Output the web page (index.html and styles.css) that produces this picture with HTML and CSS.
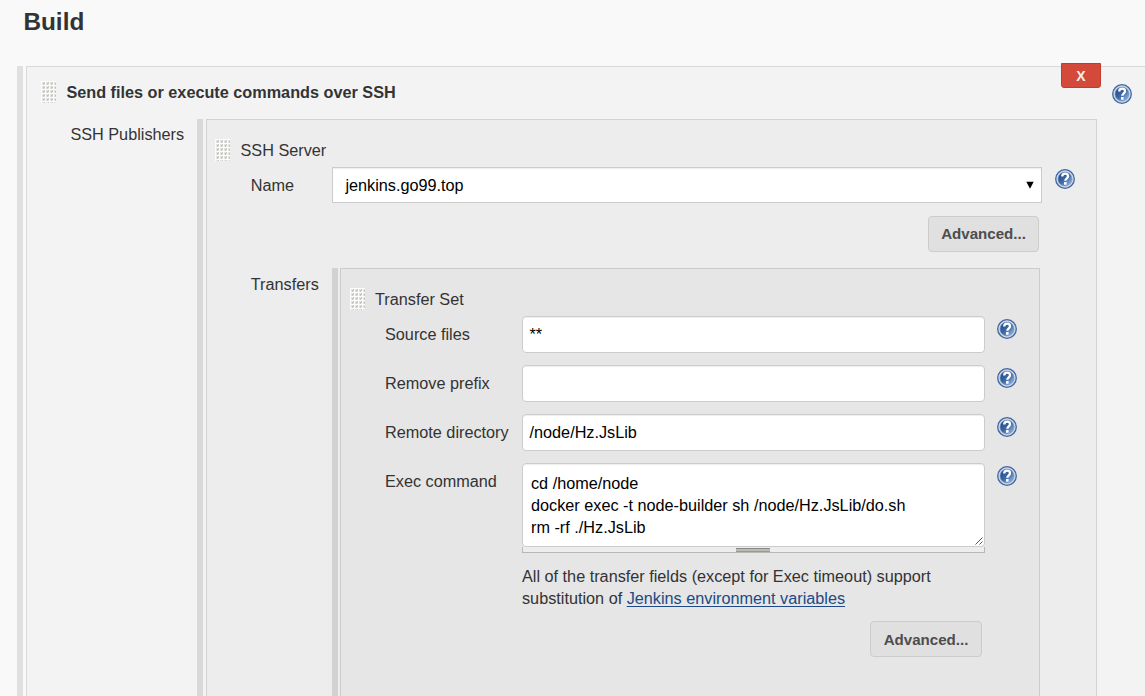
FILE: index.html
```html
<!DOCTYPE html>
<html lang="en">
<head>
<meta charset="utf-8">
<title>Build</title>
<link rel="stylesheet" href="styles.css">
</head>
<body>
<svg class="defs" width="0" height="0" aria-hidden="true">
  <defs>
    <linearGradient id="glass" x1="0" y1="0" x2="1" y2="1">
      <stop offset="0.1" stop-color="#234a86"/>
      <stop offset="0.5" stop-color="#3d68a6"/>
      <stop offset="0.9" stop-color="#8fb2da"/>
    </linearGradient>
    <pattern id="dots" x="1" y="1" width="4" height="4" patternUnits="userSpaceOnUse">
      <rect width="4" height="4" fill="#fcfcfb"/>
      <rect width="3" height="3" fill="#e3e3e1"/>
      <path d="M1 1h2v1h-1v1h-1z" fill="#cececb"/>
      <path d="M2 0h1v2h-1z" fill="#cacac7"/>
      <rect x="1" y="1" width="1" height="1" fill="#bfbfbc"/>
    </pattern>
    <symbol id="help" viewBox="0 0 20 20">
      <circle cx="10" cy="10" r="9.3" fill="#cbd9ea" stroke="#41679f" stroke-width="1.3"/>
      <circle cx="10" cy="10" r="7" fill="url(#glass)" stroke="#7896c0" stroke-width=".6"/>
      <path d="M7.2 7.6C7.2 5.5 8.3 4.7 10.1 4.7s2.9.9 2.9 2.6c0 2-2.7 2-2.7 4.5" fill="none" stroke="#fff" stroke-width="2.3"/>
      <rect x="9" y="13" width="2.6" height="2.7" rx=".5" fill="#fff"/>
    </symbol>
    <symbol id="grip" viewBox="0 0 15 22"><rect width="15" height="22" fill="#fcfcfb"/><rect x="1" y="1" width="14" height="21" fill="url(#dots)"/></symbol>
  </defs>
</svg>
<h1 class="title">Build</h1>
<section class="chunk chunk-build">
  <div class="bar"></div>
  <div class="panel">
    <button class="remove">X</button>
    <div class="heading">
      <svg class="grip"><use href="#grip"/></svg><b>Send files or execute commands over SSH</b>
      <svg class="help"><use href="#help"/></svg>
    </div>
    <div class="row">
      <div class="label publishers">SSH Publishers</div>
      <section class="chunk chunk-server">
        <div class="bar"></div>
        <div class="panel">
          <div class="heading"><svg class="grip"><use href="#grip"/></svg><span>SSH Server</span></div>
          <div class="row name-row">
            <div class="label">Name</div>
            <div class="select"><span>jenkins.go99.top</span><svg width="8" height="8"><path d="M0.3 .8h7.4L4 7.8z"/></svg></div>
            <svg class="help"><use href="#help"/></svg>
          </div>
          <div class="actions"><button class="advanced">Advanced...</button></div>
          <div class="row">
            <div class="label transfers">Transfers</div>
            <section class="chunk chunk-transfer">
              <div class="bar"></div>
              <div class="panel">
                <div class="heading"><svg class="grip"><use href="#grip"/></svg><span>Transfer Set</span></div>
                <div class="field"><div class="label">Source files</div><div class="input">**</div><svg class="help"><use href="#help"/></svg></div>
                <div class="field"><div class="label">Remove prefix</div><div class="input"></div><svg class="help"><use href="#help"/></svg></div>
                <div class="field"><div class="label">Remote directory</div><div class="input">/node/Hz.JsLib</div><svg class="help"><use href="#help"/></svg></div>
                <div class="field">
                  <div class="label">Exec command</div>
                  <div class="command">
                    <div class="textarea">cd /home/node<br>docker exec -t node-builder sh /node/Hz.JsLib/do.sh<br>rm -rf ./Hz.JsLib<svg class="corner" width="8" height="8"><path d="M.5 7.5l7-7M4.5 7.5l3-3" stroke="#555" fill="none"/></svg></div>
                    <div class="handle"><span></span></div>
                    <p class="note">All of the transfer fields (except for Exec timeout) support<br>substitution of <a href="#">Jenkins environment variables</a></p>
                  </div>
                  <svg class="help"><use href="#help"/></svg>
                </div>
                <div class="actions"><button class="advanced">Advanced...</button></div>
              </div>
            </section>
          </div>
        </div>
      </section>
    </div>
  </div>
</section>
</body>
</html>
```

FILE: styles.css
```css
* { box-sizing: border-box; }
body {
  margin: 0;
  height: 696px;
  overflow: hidden;
  display: flex;
  flex-direction: column;
  background: #f9f9f9;
  color: #333;
  font: 16.24px/22px "Liberation Sans", Arial, sans-serif;
}
.defs { position: absolute; }
.title { margin: 0; padding: 7px 0 0 23.4px; height: 66px; font-size: 24.36px; line-height: 29px; flex: none; }
.chunk { display: flex; min-width: 0; }
.bar { width: 6px; margin-right: 3px; flex: none; }
.panel { flex: 1; min-width: 0; border: 1px solid #d2d2d2; border-bottom: 0; display: flex; flex-direction: column; }
.row { display: flex; }
.row:last-child { flex: 1; }
.label { flex: none; }
.heading { display: flex; align-items: flex-start; }
.grip { width: 15px; height: 22px; flex: none; }
.help { width: 20px; height: 20px; flex: none; }

.chunk-build { flex: 1; margin-left: 17px; }
.chunk-build > .bar { background: #e0e0e0; }
.chunk-build > .panel { position: relative; background: #f3f3f3; border-color: #d9d9d9; border-right: 0; }
.chunk-build > .panel > .heading { padding: 14px 13px 0 14px; height: 52px; gap: 10.4px; }
.chunk-build > .panel > .heading .help { margin: 3px 0 0 auto; }
.remove {
  position: absolute;
  top: -4px;
  right: 44px;
  width: 40px;
  height: 25px;
  padding: 1px 0 0;
  border: 1px solid #c23c2e;
  border-radius: 0 0 3px 3px;
  background: #d34a3a;
  color: #f2eeee;
  font: bold 14px/22px "Liberation Sans", Arial, sans-serif;
}
.publishers { width: 170px; padding: 4px 0 0 43.4px; }

.chunk-server { width: 900px; }
.chunk-server > .bar { background: #d9d9d9; }
.chunk-server > .panel { background: #ededed; }
.chunk-server > .panel > .heading { padding: 19px 0 0 8px; height: 47px; gap: 10.5px; }
.name-row .label { width: 125px; padding: 7px 0 0 43.8px; }
.select {
  width: 710px;
  height: 36px;
  padding: 0 7px 0 12.4px;
  border: 1px solid #ccc;
  background: #fff;
  color: #000;
  box-shadow: inset 0 1px 1px #eee;
  display: flex;
  align-items: center;
  justify-content: space-between;
}
.select span { line-height: 22px; margin-top: -1px; }
.name-row .help { margin: 2px 0 0 13px; }
.advanced {
  width: 111px;
  height: 36px;
  padding: 0;
  border: 1px solid #ccc;
  border-radius: 4px;
  background: #e0e0e0;
  color: #4d4d4d;
  font: bold 15.1px/34px "Liberation Sans", Arial, sans-serif;
}
.chunk-server > .panel > .actions { display: flex; justify-content: flex-end; padding: 13px 57px 16px 0; }
.transfers { width: 125px; padding: 5px 0 0 43.8px; }

.chunk-transfer { width: 708px; }
.chunk-transfer > .bar { background: #d2d2d2; margin-right: 2px; }
.chunk-transfer > .panel { background: #e6e6e6; border-color: #cbcbcb; }
.chunk-transfer > .panel > .heading { padding: 19px 0 0 9px; height: 47px; gap: 10px; }
.field { display: flex; align-items: flex-start; margin-bottom: 12px; }
.field .label { width: 181px; padding: 7px 0 0 44px; }
.field .help { margin: 3px 0 0 12px; }
.input, .textarea { width: 463px; border: 1px solid #ccc; border-radius: 4px; background: #fff; color: #000; box-shadow: inset 0 1px 1px #eee; }
.input { height: 37px; padding: 6px 6.5px; }
.command { width: 463px; }
.textarea { position: relative; height: 84px; padding: 8px; }
.corner { position: absolute; right: 1px; bottom: 1px; }
.handle { height: 6px; padding-right: 1px; border: solid #b9b9b4; border-width: 0 1px 1px; background: #ededed; display: flex; justify-content: center; }
.handle span { width: 34px; height: 4px; margin-top: 1px; background: #bbbbb8; border-top: 1px solid #888; border-bottom: 1px solid #999; }
.note { margin: 12px -10px 0 0; }
.note a { color: #204a87; text-underline-offset: 2px; }
.chunk-transfer .actions { display: flex; justify-content: flex-end; padding-right: 57px; }
.chunk-transfer .advanced { width: 112px; padding-top: 1px; }
```
